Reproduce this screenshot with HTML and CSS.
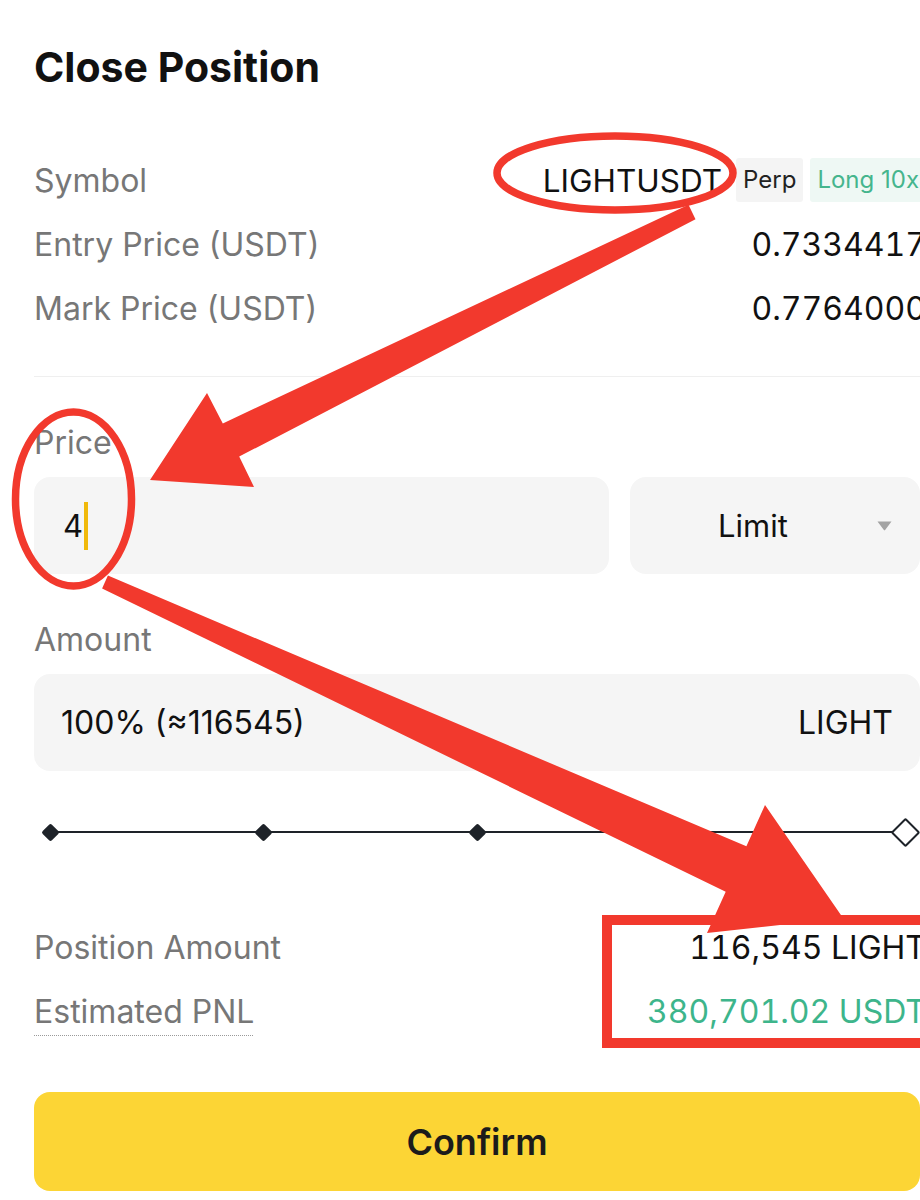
FILE: index.html
```html
<!DOCTYPE html>
<html lang="en">
<head>
<meta charset="utf-8">
<title>Close Position</title>
<link rel="stylesheet" href="styles.css">
</head>
<body>
<main class="sheet">
  <h1 class="title">Close Position</h1>

  <section class="info">
    <div class="row">
      <span class="label">Symbol</span>
      <span class="value symbol">
        <span class="pair">LIGHTUSDT</span>
        <span class="tag perp">Perp</span>
        <span class="tag long">Long 10x</span>
      </span>
    </div>
    <div class="row">
      <span class="label">Entry Price (USDT)</span>
      <span class="value num">0.7334417</span>
    </div>
    <div class="row">
      <span class="label">Mark Price (USDT)</span>
      <span class="value num">0.7764000</span>
    </div>
  </section>

  <hr class="divider">

  <div class="field-label">Price</div>
  <div class="price-grid">
    <div class="box price-input"><span class="typed">4</span><span class="caret"></span></div>
    <div class="box select">
      <span class="select-text">Limit</span>
      <svg class="caret-down" width="17" height="11" viewBox="0 0 17 11"><path d="M1.5 1.5h14l-6.2 8.2a1 1 0 0 1-1.6 0z" fill="#a3a3a3"/></svg>
    </div>
  </div>

  <div class="field-label">Amount</div>
  <div class="box amount">
    <span>100% (≈116545)</span>
    <span>LIGHT</span>
  </div>

  <div class="slider">
    <span class="stop"><i></i></span>
    <span class="stop"><i></i></span>
    <span class="stop"><i></i></span>
    <span class="stop"><i></i></span>
    <span class="stop end"><i></i></span>
  </div>

  <section class="summary">
    <div class="row">
      <span class="label">Position Amount</span>
      <span class="value num">116,545 LIGHT</span>
    </div>
    <div class="row">
      <span class="label dotted">Estimated PNL</span>
      <span class="value num green">380,701.02 USDT</span>
    </div>
  </section>

  <button class="confirm" type="button">Confirm</button>
</main>

<svg class="markup" width="920" height="1200" viewBox="0 0 920 1200" aria-hidden="true">
  <g fill="#f2392d">
    <polygon points="688.5,204.8 222.8,423.4 207,393 150,480 254,487 239.2,456.6 695.5,219.2"/>
    <polygon points="107.9,575.6 746.4,846.3 765,805 843,918 707,933 725.7,891.8 102.1,588.4"/>
  </g>
  <g fill="none" stroke="#f2392d">
    <ellipse cx="615" cy="173" rx="118" ry="37" stroke-width="7.5"/>
    <ellipse cx="73.5" cy="499" rx="58" ry="87" stroke-width="7.5"/>
    <rect x="607" y="920" width="340" height="123" stroke-width="10"/>
  </g>
</svg>
</body>
</html>
```

FILE: styles.css
```css
* {
  box-sizing: border-box;
  margin: 0;
  padding: 0;
}

html, body {
  background: #ffffff;
}

body {
  width: 920px;
  height: 1200px;
  overflow: hidden;
  position: relative;
  font-family: Inter, "Liberation Sans", sans-serif;
  color: #131313;
}

.sheet {
  padding: 42px 0 0 34px;
}

.title {
  font-size: 41px;
  font-weight: 700;
  line-height: 50px;
  color: #111111;
}

.info {
  margin-top: 56px;
  margin-right: -6px;
}

.summary {
  margin-top: 63px;
  margin-right: -6px;
}

.row {
  display: flex;
  justify-content: space-between;
  align-items: center;
  height: 64px;
}

.label {
  font-size: 32px;
  color: #777777;
}

.value {
  font-size: 32px;
  color: #111111;
  white-space: nowrap;
}

.value.num {
  font-variant-numeric: tabular-nums;
}

.value.green {
  color: #3db58b;
}

.dotted {
  text-decoration: underline dotted #9a9a9a;
  text-decoration-thickness: 1px;
  text-underline-offset: 12px;
}

.symbol {
  display: flex;
  align-items: center;
}

.pair {
  font-size: 31.5px;
  margin-right: 14px;
}

.tag {
  font-size: 24px;
  height: 44px;
  line-height: 44px;
  padding: 0 7px;
  border-radius: 3px;
}

.perp {
  background: #f4f4f4;
  color: #222222;
  margin-right: 7px;
}

.long {
  background: #eef8f4;
  color: #45b58d;
}

.divider {
  border: 0;
  height: 1px;
  background: #efefef;
  margin-top: 36px;
}

.field-label {
  font-size: 32px;
  line-height: 40px;
  color: #777777;
  margin-top: 46px;
}

.price-grid {
  display: grid;
  grid-template-columns: 575px 1fr;
  column-gap: 21px;
  margin-top: 14px;
}

.box {
  background: #f5f5f5;
  border-radius: 16px;
  height: 97px;
  display: flex;
  align-items: center;
  font-size: 31px;
  color: #111111;
}

.price-input {
  padding-left: 29px;
}

.caret {
  display: block;
  width: 4px;
  height: 48px;
  margin-left: 1px;
  background: #f0b90b;
}

.select {
  padding-right: 27px;
}

.select-text {
  flex: 1;
  text-align: center;
}

.amount {
  margin-top: 14px;
  justify-content: space-between;
  padding: 0 27px;
  font-size: 32px;
}

.slider {
  margin: 41px 6px 0 7px;
  height: 40px;
  display: flex;
  justify-content: space-between;
  align-items: center;
  background: linear-gradient(#1e2329, #1e2329) no-repeat center / calc(100% - 18px) 2px;
}

.stop {
  width: 18px;
  height: 18px;
  display: flex;
  align-items: center;
  justify-content: center;
}

.stop i {
  display: block;
  width: 13px;
  height: 13px;
  background: #1e2329;
  border-radius: 2px;
  transform: rotate(45deg);
  flex: none;
}

.stop.end i {
  width: 21px;
  height: 21px;
  background: #ffffff;
  border: 2px solid #1e2329;
}

.confirm {
  display: block;
  width: 100%;
  height: 99px;
  margin-top: 49px;
  border: 0;
  border-radius: 16px;
  background: #fcd535;
  font-family: Inter, "Liberation Sans", sans-serif;
  font-size: 36px;
  font-weight: 600;
  color: #1b1b1b;
}

.markup {
  position: absolute;
  top: 0;
  left: 0;
  pointer-events: none;
}
```
